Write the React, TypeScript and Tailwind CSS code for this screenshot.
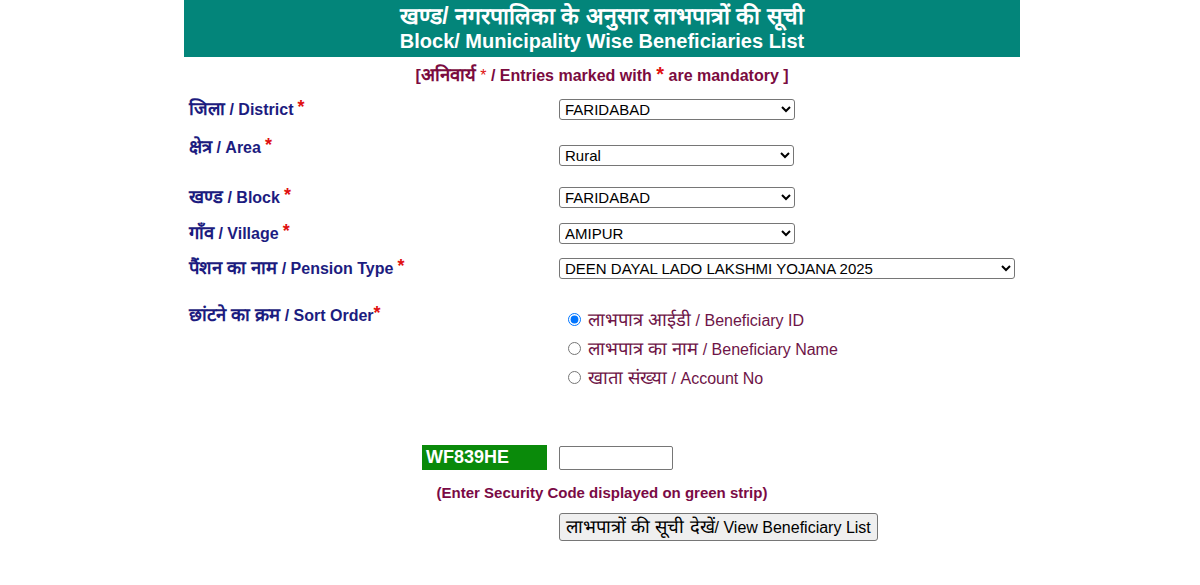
import { useState } from 'react';

const labelCls = 'text-[16px] font-bold leading-[20px] text-[#1c1c80]';
const selectCls =
  'h-[21px] rounded-[3px] border border-[#767676] bg-white pl-[1px] text-[15px] leading-[19px] text-black';

// Devanagari fallback renders small next to Arial, so bump it a bit
function Hi({ children }: { children: React.ReactNode }) {
  return <span className="text-[1.15em]">{children}</span>;
}

function Star() {
  return <span className="relative -top-[2px] ml-[4px] text-[18px] text-[#e01010]">*</span>;
}

export default function App() {
  const [sort, setSort] = useState('id');
  const [code, setCode] = useState('');

  const radios = [
    { value: 'id', hi: 'लाभपात्र आईडी', en: ' / Beneficiary ID' },
    { value: 'name', hi: 'लाभपात्र का नाम', en: ' / Beneficiary Name' },
    { value: 'acc', hi: 'खाता संख्या', en: ' / Account No' },
  ];

  return (
    <div className="min-h-[585px] bg-white font-['Liberation_Sans',Arial,sans-serif]">
      <div className="ml-[184px] w-[836px]">
        {/* title strip */}
        <div className="flex h-[57px] flex-col items-center bg-[#03857a] pt-[4px] text-[20px] font-bold leading-[24px] text-white">
          <div>
            <Hi>खण्ड/ नगरपालिका के अनुसार लाभपात्रों की सूची</Hi>
          </div>
          <div>Block/ Municipality Wise Beneficiaries List</div>
        </div>

        <div className="mt-[7px] text-center text-[16px] font-bold leading-[20px] text-[#7b0b3f]">
          [<Hi>अनिवार्य</Hi> <span className="font-normal text-[#e01010]">*</span> / Entries marked with{' '}
          <span className="text-[20px] text-[#e01010]">*</span> are mandatory ]
        </div>

        {/* District */}
        <div className="mt-[13px] flex h-[21px] items-center">
          <div className={`w-[375px] pl-[5px] ${labelCls}`}>
            <Hi>जिला</Hi> / District<Star />
          </div>
          <select className={`w-[236px] ${selectCls}`} defaultValue="FARIDABAD">
            <option>FARIDABAD</option>
          </select>
        </div>

        {/* Area */}
        <div className="mt-[17px] flex">
          <div className={`w-[375px] pl-[5px] ${labelCls}`}>
            <Hi>क्षेत्र</Hi> / Area<Star />
          </div>
          <select className={`mt-[8px] w-[235px] ${selectCls}`} defaultValue="Rural">
            <option>Rural</option>
            <option>Urban</option>
          </select>
        </div>

        {/* Block */}
        <div className="mt-[21px] flex h-[21px] items-center">
          <div className={`w-[375px] pl-[5px] ${labelCls}`}>
            <Hi>खण्ड</Hi> / Block<Star />
          </div>
          <select className={`w-[236px] ${selectCls}`} defaultValue="FARIDABAD">
            <option>FARIDABAD</option>
          </select>
        </div>

        {/* Village */}
        <div className="mt-[15px] flex h-[21px] items-center">
          <div className={`w-[375px] pl-[5px] ${labelCls}`}>
            <Hi>गाँव</Hi> / Village<Star />
          </div>
          <select className={`w-[236px] ${selectCls}`} defaultValue="AMIPUR">
            <option>AMIPUR</option>
          </select>
        </div>

        {/* Pension type */}
        <div className="mt-[14px] flex h-[21px] items-center">
          <div className={`w-[375px] pl-[5px] ${labelCls}`}>
            <Hi>पैंशन का नाम</Hi> / Pension Type<Star />
          </div>
          <select className={`w-[456px] ${selectCls}`} defaultValue="DDL">
            <option value="DDL">DEEN DAYAL LADO LAKSHMI YOJANA 2025</option>
          </select>
        </div>

        {/* Sort order */}
        <div className="mt-[26px] flex">
          <div className={`w-[375px] pl-[5px] ${labelCls}`}>
            <Hi>छांटने का क्रम</Hi> / Sort Order
            <span className="relative -top-[2px] text-[18px] text-[#e01010]">*</span>
          </div>
          <div className="flex flex-col pl-[9px]">
            {radios.map((r) => (
              <label
                key={r.value}
                className="flex h-[29px] items-center gap-[7px] text-[16px] text-[#6e1447]"
              >
                <input
                  type="radio"
                  name="sort"
                  className="m-0 h-[13px] w-[13px]"
                  checked={sort === r.value}
                  onChange={() => setSort(r.value)}
                />
                <span className="whitespace-pre">
                  <Hi>{r.hi}</Hi>
                  {r.en}
                </span>
              </label>
            ))}
          </div>
        </div>

        {/* captcha */}
        <div className="mt-[53px] flex h-[25px] items-center">
          <div className="flex w-[363px] justify-end">
            <div className="flex h-[25px] w-[125px] shrink-0 items-center bg-[#0a8a0a] pl-[4px] text-[18px] font-bold text-white">
              WF839HE
            </div>
          </div>
          <input
            className="ml-[12px] h-[24px] w-[114px] rounded-[2px] border border-[#767676] bg-white px-[3px] text-[14px]"
            value={code}
            onChange={(e) => setCode(e.target.value)}
          />
        </div>

        <div className="mt-[14px] text-center text-[15px] font-bold leading-[18px] text-[#7a0a45]">
          (Enter Security Code displayed on green strip)
        </div>

        <div className="mt-[11px] flex">
          <div className="w-[375px]" />
          <button className="h-[28px] w-[319px] rounded-[3px] border border-[#767676] bg-[#efefef] text-[16px] leading-[20px] text-black">
            <Hi>लाभपात्रों की सूची देखें</Hi>/ View Beneficiary List
          </button>
        </div>
      </div>
    </div>
  );
}
